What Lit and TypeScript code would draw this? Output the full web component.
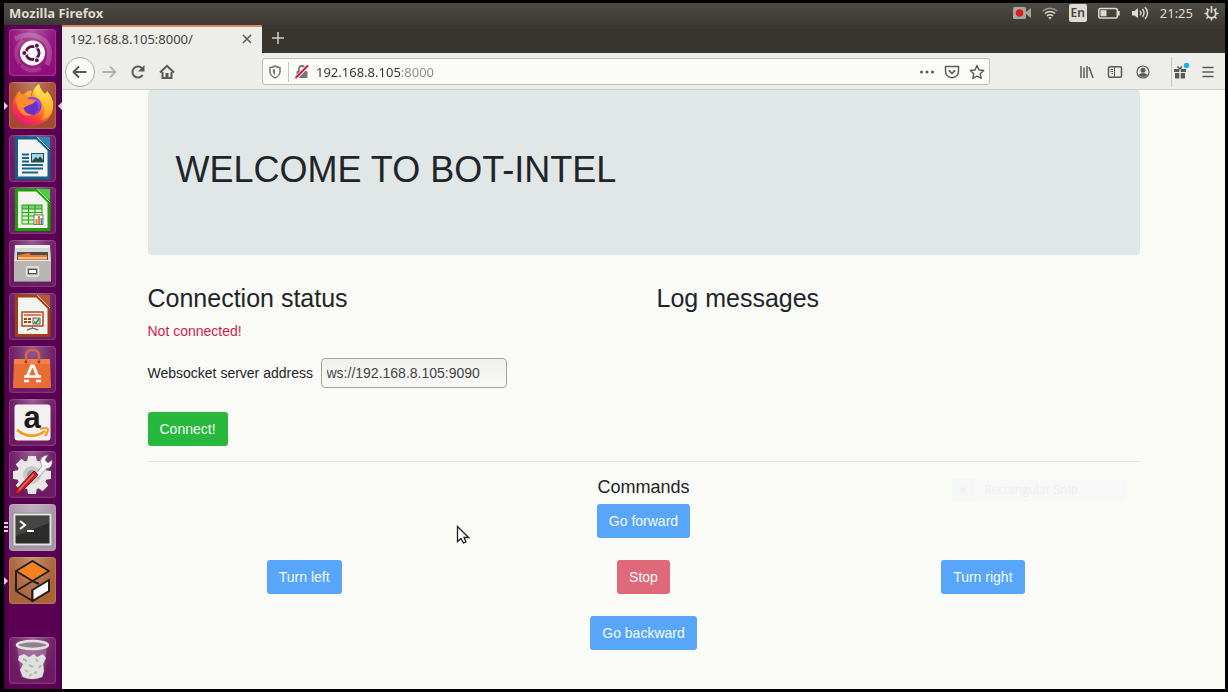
import { LitElement, html, css, svg } from "lit";
import { customElement, property, state } from "lit/decorators.js";

const launcherArt: Record<string, unknown> = {
  dash: svg`
    <path d="M6 10Q22 1 36 12Q44 22 38 36" fill="none" stroke="#fff" stroke-opacity=".2" stroke-width="5"/>
    <path d="M11 35Q2 22 14 11M32 39Q21 45 12 36" fill="none" stroke="#fff" stroke-opacity=".14" stroke-width="4"/>
    <circle cx="23.500" cy="24" r="12.500" fill="#fff"/>
    <circle cx="23.500" cy="24" r="6.500" fill="none" stroke="#5b1550" stroke-width="3"/>
    <path d="M23.500 24L13 24M23.500 24L28.500 14.500M23.500 24L28.500 33.500" stroke="#fff" stroke-width="1.400"/>
    <circle cx="23.500" cy="24" r="5" fill="#fff"/>
    <g fill="#5b1550" stroke="#fff"><circle cx="15.300" cy="24" r="2.500"/><circle cx="27.800" cy="16.700" r="2.500"/><circle cx="27.800" cy="31.300" r="2.500"/></g>`,
  firefox: svg`
    <defs>
      <linearGradient id="ff" x1=".8" y1=".1" x2=".25" y2=".95"><stop offset="0" stop-color="#fff04e"/><stop offset=".4" stop-color="#ff9a20"/><stop offset=".75" stop-color="#fb3b3e"/><stop offset="1" stop-color="#e8197a"/></linearGradient>
      <linearGradient id="fy" x1="0" y1="0" x2="0" y2="1"><stop offset="0" stop-color="#fff253"/><stop offset="1" stop-color="#ff9820"/></linearGradient>
    </defs>
    <path d="M8 12Q9 10 11 9Q11 13 15 12Q19 8 23 9Q21 13 23 15Q23 6 30 2Q31 8 36 12Q38 11 38 9Q45 17 44 26Q42 41 25 43Q8 44 3.500 29Q2 20 8 12Z" fill="url(#ff)"/>
    <path d="M30 2Q31 8 36 12Q38 11 38 9Q45 17 44 25Q41 36 33 38Q38 28 33 19Q26 14 26 11Q26 5 30 2Z" fill="url(#fy)"/>
    <circle cx="23.500" cy="24" r="9" fill="#6b30c8"/>
    <path d="M16 18Q25 10 32 21Q31 31 25 33Q33 25 26 19Z" fill="#9047ef"/>
    <path d="M8 14Q13 12 15 14L19 17L27 18Q25 22 20 23Q16 25 14 26Q16 32 24 33Q14 36 10 28Q6 21 8 14Z" fill="#ff8b2b"/>`,
  writer: svg`
    <path d="M7.500 3H28L40 15V43H7.500Z" fill="#f4f4f0" stroke="#11618a" stroke-width="3"/>
    <path d="M28 2H41V14Z" fill="#2f87ad"/><path d="M28 2L41 15" stroke="#bde1ef" stroke-width="1"/>
    <path d="M13 19.500H20M13 23H20M13 26.500H20M13 30H34M13 33.500H34M13 37.500H29" stroke="#16658c" stroke-width="1.800"/>
    <rect x="22.500" y="18.500" width="12" height="8.500" fill="#9ed8ee" stroke="#16506e"/>
    <path d="M23 26L27 22L29 24L31 21L34 25V27H23Z" fill="#2b4d45"/><circle cx="31" cy="21" r="1" fill="#f7c341"/>`,
  calc: svg`
    <path d="M7.500 3H28L40 15V42.500H7.500Z" fill="#f4f4f0" stroke="#18a303" stroke-width="3"/>
    <path d="M28 2H41V14Z" fill="#48cf3d"/><path d="M28 2L41 15" stroke="#d2f5cc"/>
    <rect x="13" y="18" width="20" height="19" fill="#d2f2ca" stroke="#28a31c"/>
    <path d="M13 22H33M13 25.500H33M13 29H33M13 33H33M19.500 18V37M26 18V37" stroke="#28a31c"/><path d="M13 18H33V22H13Z" fill="#28a31c" fill-opacity=".5"/>
    <rect x="25" y="28" width="9" height="9.500" fill="#fff" stroke="#777"/>
    <path d="M27.500 37V32M30 37V29" stroke="#de8228" stroke-width="2"/><path d="M32.500 37V31" stroke="#4587ca" stroke-width="2"/>`,
  files: svg`
    <path d="M6 5H41L42 21H5Z" fill="#d9d8d4"/><path d="M6 5H41V8H6Z" fill="#f2f1ed"/>
    <path d="M8 12H39V21H8Z" fill="#504c49"/><path d="M9 15L20 13L22 15H38V21H9Z" fill="#e47b37"/><path d="M9 18H38" stroke="#f8d3a4" stroke-width="1.500"/>
    <rect x="5" y="20" width="37" height="22" rx="1" fill="#b9b7b3"/><path d="M5.500 20.500H41.500" stroke="#ebeae6"/><path d="M5 41.500H42" stroke="#83807d"/>
    <rect x="17.500" y="27" width="12" height="9" rx="1.500" fill="#aaa8a4" stroke="#ecebe8" stroke-width="1.300"/><rect x="19.500" y="29.500" width="8" height="4" fill="#fff" stroke="#55514e"/>`,
  impress: svg`
    <path d="M7.500 3H28L40 15V42.500H7.500Z" fill="#f4f4f0" stroke="#a33e12" stroke-width="3"/>
    <path d="M28 2H41V14Z" fill="#b45a31"/><path d="M28 2L41 15" stroke="#efcfbe"/>
    <rect x="13" y="19" width="21" height="14" fill="#fff3ed" stroke="#ad4720" stroke-width="1.500"/>
    <path d="M15 22H32" stroke="#d95127" stroke-width="1.500"/><path d="M15 26H22M15 29H22" stroke="#a33e12" stroke-width="2" stroke-dasharray="3 1"/>
    <rect x="24" y="25" width="7" height="6" fill="#ddd" stroke="#666"/><path d="M25 29L27 30L30 26" fill="none" stroke="#1a9a2c" stroke-width="1.500"/>
    <path d="M23.500 33V36M18 37L23.500 35L29 37" fill="none" stroke="#777" stroke-width="1.500"/>`,
  software: svg`
    <path d="M5 13H41L42 42H4Z" fill="#e96d35"/><path d="M5 13H41V18H5Z" fill="#f18247"/>
    <path d="M17 16V10Q17 4 23.500 4Q30 4 30 10V16" fill="none" stroke="#d36748" stroke-width="2.500"/>
    <circle cx="17" cy="16" r="1.300" fill="#8d3418"/><circle cx="30" cy="16" r="1.300" fill="#8d3418"/>
    <path d="M18 31L22.500 20H24.500L29 31" fill="none" stroke="#fff" stroke-width="3"/><path d="M15 30.500H32" stroke="#fff" stroke-width="2.500"/><path d="M15 35H20M27 35H32" stroke="#fff" stroke-width="2.500"/>`,
  amazon: svg`
    <rect x="5.500" y="5.500" width="36" height="36" rx="3" fill="#f4f2f0"/>
    <text x="23" y="29" text-anchor="middle" font-family="Liberation Sans, sans-serif" font-weight="700" font-size="31" fill="#191919">a</text>
    <path d="M8 31Q22 42 36 32" fill="none" stroke="#f59a16" stroke-width="2.500"/><path d="M31 30Q38 28 39 30Q39 34 36 37" fill="none" stroke="#f59a16" stroke-width="2"/>`,
  settings: svg`
    <g transform="translate(23 24)" fill="#e9e8e6"><circle r="15"/>
      ${[0, 45, 90, 135, 180, 225, 270, 315].map((a) => svg`<path transform="rotate(${a})" d="M-4-19H4L5-12H-5Z"/>`)}
      <circle r="9" fill="#cac8c7"/><circle r="5" fill="#a09b9c"/></g>
    <path d="M26 24L33 15Q29 8 35 5L39 4L36 9L39 12L43 9Q44 17 37 18L29 27Z" fill="#f7f7f7" stroke="#8a8a8a" stroke-width=".8"/>
    <path d="M7 39L25 20L29 24L11 42Q8 44 6 42Q5 41 7 39Z" fill="#c91e29" stroke="#7e0b19"/><path d="M10 39L25 23" stroke="#ef6e6c" stroke-width="1.200"/>`,
  terminal: svg`
    <rect x="4" y="9" width="39" height="33" rx="1" fill="#e4e4e1" stroke="#928c91"/><rect x="6.500" y="11.500" width="34" height="28" fill="#2c2d2b"/>
    <path d="M7 12H40V19L7 32Z" fill="#fff" fill-opacity=".12"/><path d="M11 17L16 21L11 25" fill="none" stroke="#fff" stroke-width="2"/><path d="M18 27H25" stroke="#fff" stroke-width="1.800"/>`,
  gazebo: svg`
    <path d="M23.500 4L40 14L23.500 24L7 14Z" fill="#f58220"/>
    <path d="M23.500 4L40 14L23.500 24L7 14ZM7 14V34L23.500 44V33M7 34L23.500 24L30 27M23.500 44L40 34V23" fill="none" stroke="#21201f" stroke-width="2" stroke-linejoin="round"/>
    <path d="M23.500 33L40 23V34L23.500 44Z" fill="#fff" stroke="#21201f" stroke-width="2"/>`,
  trash: svg`
    <path d="M8 9L12 40Q23.500 45 34 40L38 9Z" fill="#fff" fill-opacity=".22"/>
    <path d="M10 19L15 17L20 20L25 17L28 20L34 17L37 21L34 27L35 34L33 40Q23 44 14 40L11 33L14 27L9 23Z" fill="#dfe1de"/>
    <path d="M14 22L18 24M20 28L24 30M27 22L29 25M32 28L30 31M16 33L19 35M25 36L28 35M20 39L23 37" fill="none" stroke="#b3b6b1" stroke-width="2"/>
    <ellipse cx="23.500" cy="8" rx="15.500" ry="4" fill="#95808f" stroke="#e2e2e0" stroke-width="2.500"/>`,
};

const glyphs: Record<string, unknown> = {
  back: svg`<path d="M14.500 8H2M7 2.500L1.500 8L7 13.500" fill="none" stroke="currentColor" stroke-width="2"/>`,
  forward: svg`<path d="M1.500 8H14M9 2.500L14.500 8L9 13.500" fill="none" stroke="currentColor" stroke-width="1.800"/>`,
  reload: svg`<path d="M12.600 11A5.500 5.500 0 1 1 12 4.300" fill="none" stroke="currentColor" stroke-width="2"/><path d="M14.500 1V7.500H8Z" fill="currentColor"/>`,
  home: svg`<path d="M1 8.500L8 1.800L15 8.500" fill="none" stroke="currentColor" stroke-width="2"/><path d="M3.500 8V14H12.500V8" fill="none" stroke="currentColor" stroke-width="2"/><path d="M6.500 9H9.500V14H6.500Z" fill="currentColor"/>`,
  close: svg`<path d="M4 4L12 12M12 4L4 12" stroke="currentColor" stroke-width="1.500"/>`,
  plus: svg`<path d="M8 2V14M2 8H14" stroke="currentColor" stroke-width="1.500"/>`,
  shield: svg`<path d="M8 2Q10.500 3.500 13 3.500V8Q12.500 12 8 14Q3.500 12 3 8V3.500Q5.500 3.500 8 2Z" fill="none" stroke="currentColor" stroke-width="1.500"/><path d="M8 5V11Q6 10 5.800 8V5.500Z" fill="currentColor"/>`,
  lock: svg`<rect x="2.500" y="7" width="11" height="7" rx="1" fill="#777"/><path d="M5 7V5Q5 2 8 2Q11 2 11 5V7" fill="none" stroke="#777" stroke-width="1.800"/><path d="M1.500 14.500L14 1.500" stroke="#fbfbf8" stroke-width="3.500"/><path d="M1.500 14L14 1.500" stroke="#d70a45" stroke-width="1.800"/>`,
  dots: svg`<g fill="currentColor"><circle cx="2.500" cy="8" r="1.500"/><circle cx="8" cy="8" r="1.500"/><circle cx="13.500" cy="8" r="1.500"/></g>`,
  pocket: svg`<path d="M1.500 2.500H14.500V7Q14 13.500 8 13.700Q2 13.500 1.500 7Z" fill="none" stroke="currentColor" stroke-width="1.500" stroke-linejoin="round"/><path d="M4.800 6.300L8 9.300L11.200 6.300" fill="none" stroke="currentColor" stroke-width="1.700"/>`,
  star: svg`<path d="M8 1.500L10 6L14.700 6.500L11.200 9.700L12.200 14.400L8 12L3.800 14.400L4.800 9.700L1.300 6.500L6 6Z" fill="none" stroke="currentColor" stroke-width="1.400" stroke-linejoin="round"/>`,
  library: svg`<path d="M2 2V14M5 3.500V14M8 2V14M10 3L14 14" stroke="currentColor" stroke-width="1.500"/>`,
  sidebar: svg`<rect x="1.500" y="2.800" width="13" height="10.500" rx="1.500" fill="none" stroke="currentColor" stroke-width="1.500"/><path d="M7.500 3V13M3.500 5.500H6M3.500 7.500H6M4.500 9.500H6" stroke="currentColor"/>`,
  account: svg`<circle cx="8" cy="8" r="6" fill="none" stroke="currentColor" stroke-width="1.200"/><circle cx="8" cy="6.200" r="2.500" fill="currentColor"/><path d="M3.500 11Q5 9 8 9Q11 9 12.500 11Q11 13 8 13Q5 13 3.500 11Z" fill="currentColor"/>`,
  gift: svg`<path d="M2 5H7.300V8H2ZM8.700 5H14V8H8.700ZM3 9H7.300V14.500H3ZM8.700 9H13V14.500H8.700Z" fill="currentColor"/><path d="M8 5L5.500 2.500M8 5L10 2.500" stroke="currentColor" stroke-width="1.500"/><circle cx="14.500" cy="1.500" r="2.700" fill="#12b6ef"/>`,
  menu: svg`<path d="M2.500 3.500H13.500M2.500 8H13.500M2.500 12.500H13.500" stroke="currentColor" stroke-width="1.600"/>`,
  record: svg`<rect x="0" y="2" width="13" height="12" rx="1.500" fill="#a8a5a1"/><path d="M13 7L18 3V13L13 9Z" fill="#a8a5a1"/><circle cx="6.500" cy="8" r="3.800" fill="#dc1d20"/>`,
  wifi: svg`<g fill="none" stroke="currentColor" stroke-width="1.400"><path d="M.7 6Q8 .5 15.300 6" opacity=".55"/><path d="M2.800 8.500Q8 4.500 13.200 8.500M4.800 11Q8 8.500 11.200 11"/></g><path d="M6.300 12.500Q8 11.300 9.700 12.500L8 14.500Z" fill="currentColor"/>`,
  battery: svg`<rect x=".8" y="3.500" width="18.500" height="9.500" rx="1.500" fill="none" stroke="currentColor" stroke-width="1.500"/><rect x="2.500" y="5.200" width="6" height="6" fill="currentColor"/><path d="M20.800 6V10.500" stroke="currentColor" stroke-width="1.800"/>`,
  sound: svg`<path d="M1 6H3.500L7 3V13L3.500 10.500H1Z" fill="currentColor"/><path d="M9 6Q11 8 9 10.300M11.500 4Q14.500 8 11.500 12M14 2Q19 8 14 14" fill="none" stroke="currentColor" stroke-width="1.400"/>`,
  power: svg`<circle cx="7.500" cy="8.500" r="4.300" fill="none" stroke="currentColor" stroke-width="1.800"/><path d="M7.500 2V8" stroke="#49473f" stroke-width="4"/><path d="M7.500 1V8M.5 8.500H3M12 8.500H14.500M2.500 3.500L4.300 5.300M12.500 3.500L10.700 5.300M2.500 13.500L4.300 11.700M12.500 13.500L10.700 11.700M7.500 13V15.500" stroke="currentColor" stroke-width="1.600"/>`,
};

const glyph = (name: string, width = 16) =>
  html`<svg width=${width} height="16" viewBox="0 0 ${width} 16" aria-hidden="true">${glyphs[name]}</svg>`;

@customElement("system-panel")
class SystemPanel extends LitElement {
  static styles = css`
    :host { display: flex; align-items: center; justify-content: space-between; box-sizing: border-box; height: 22px; padding: 0 6px 2px 5px;
      background: linear-gradient(#4d4a42, #3c3a34); color: #dfdbd2; font: 12px/20px "Noto Sans", sans-serif; }
    svg { display: block; }
    .title { font-weight: 700; font-size: 13px; }
    .tray { display: flex; align-items: center; gap: 11px; }
    .lang { background: #dfdbd2; color: #45423b; border-radius: 2px; width: 18px; line-height: 18px; text-align: center; font-weight: 600; }
    time { font-size: 13px; }
  `;
  render() {
    return html`
      <span class="title">Mozilla Firefox</span>
      <div class="tray">
        ${glyph("record", 18)}${glyph("wifi")}<span class="lang">En</span>${glyph("battery", 22)}${glyph("sound", 18)}
        <time>21:25</time>${glyph("power", 15)}
      </div>`;
  }
}

interface LauncherItem { icon: string; label: string; tile: string; mark?: string; }

@customElement("app-launcher")
class AppLauncher extends LitElement {
  static styles = css`
    :host { display: flex; flex-direction: column; gap: 33px; width: 58px; padding: 4px 0 5px; box-sizing: border-box;
      background: linear-gradient(90deg, #4c0046, #5c0053 8px, #5c0053 52px, #4c0046); }
    .apps { flex: 1; display: flex; flex-direction: column; justify-content: space-between; }
    .slot { position: relative; display: flex; justify-content: center; padding-right: 1px; }
    .tile { display: block; width: 47px; height: 47px; padding: 0; border: 0; border-radius: 4px; overflow: hidden;
      box-shadow: inset 0 0 2px rgba(255, 255, 255, 0.5);
      background: radial-gradient(ellipse at 50% 0, rgba(255, 255, 255, 0.3), rgba(255, 255, 255, 0.02) 70%); }
    .plum { background-color: #8f0a78; }
    .rust { background-color: #a2462b; }
    .dark { background-color: #6a1560; }
    .grey { background-color: #a692a8; }
    .copper { background-color: #a95f32; }
    .running::before, .focused::after { content: ""; position: absolute; top: 20px; border: 4px solid transparent; }
    .running::before { left: 0; border-left-color: #ddd3dc; border-right-width: 0; }
    .focused::after { right: 0; border-right-color: #ddd3dc; border-left-width: 0; }
    .several::before { content: ""; position: absolute; left: 0; top: 18px; width: 4px; height: 10px;
      background: repeating-linear-gradient(#ddd3dc 0 2px, transparent 2px 4px); }
    svg { display: block; }
  `;
  @property({ attribute: false }) items: LauncherItem[] = [
    { icon: "dash", label: "Search your computer", tile: "plum" },
    { icon: "firefox", label: "Firefox", tile: "rust", mark: "running focused" },
    { icon: "writer", label: "LibreOffice Writer", tile: "dark" },
    { icon: "calc", label: "LibreOffice Calc", tile: "dark" },
    { icon: "files", label: "Files", tile: "dark" },
    { icon: "impress", label: "LibreOffice Impress", tile: "dark" },
    { icon: "software", label: "Ubuntu Software", tile: "dark" },
    { icon: "amazon", label: "Amazon", tile: "dark" },
    { icon: "settings", label: "System Settings", tile: "dark" },
    { icon: "terminal", label: "Terminal", tile: "grey", mark: "several" },
    { icon: "gazebo", label: "Gazebo", tile: "copper", mark: "running" },
  ];
  private slotFor(item: LauncherItem) {
    return html`<div class="slot ${item.mark ?? ""}">
      <button class="tile ${item.tile}" aria-label=${item.label}>
        <svg width="47" height="47" viewBox="0 0 47 47" aria-hidden="true">${launcherArt[item.icon]}</svg>
      </button>
    </div>`;
  }
  render() {
    return html`<div class="apps">${this.items.map((i) => this.slotFor(i))}</div>
      ${this.slotFor({ icon: "trash", label: "Trash", tile: "dark" })}`;
  }
}

@customElement("browser-chrome")
class BrowserChrome extends LitElement {
  static styles = css`
    :host { display: block; font: 13px/20px "Noto Sans", sans-serif; color: #44443f; }
    svg { display: block; }
    button { display: flex; align-items: center; justify-content: center; border: 0; padding: 0; background: none; color: #5a5a55; }
    .tabs { display: flex; height: 28px; background: #37352e; }
    .tab { display: flex; align-items: center; justify-content: space-between; box-sizing: border-box; width: 200px;
      padding: 0 7px 2px 8px; background: #edeee9; border-top: 2px solid #e08563; }
    .new { width: 31px; padding-bottom: 2px; color: #d0cec7; }
    .bar { display: flex; align-items: center; box-sizing: border-box; height: 37px; padding-top: 1px; background: #edeee9; border-bottom: 1px solid #cbccc5; }
    .nav { display: flex; align-items: center; gap: 13px; width: 197px; padding-left: 3px; }
    .nav .back { box-sizing: border-box; width: 30px; height: 30px; border: 1px solid #a9aaa4; border-radius: 50%; background: #fafaf7; margin-right: -7px; }
    .nav .off { color: #b3b3ae; }
    .address { flex: 1; min-width: 0; display: flex; align-items: center; box-sizing: border-box; height: 27px; padding: 0 4px;
      border: 1px solid #bfc0b9; border-radius: 3px; background: #fbfbf8; color: #6a6a65; }
    .shield { color: #777; }
    .rule { width: 1px; height: 20px; margin: 0 5px; background: #c8c8c2; }
    .url { flex: 1; min-width: 0; border: 0; outline: 0; padding: 0; margin-left: 6px; font: inherit; color: transparent; caret-color: #333;
      background: linear-gradient(90deg, #33332f 84px, #8c8c87 84px); -webkit-background-clip: text; background-clip: text; }
    .inside { display: flex; gap: 9px; }
    .tools { display: flex; align-items: center; justify-content: flex-end; gap: 12px; width: 226px; padding-right: 9px; }
    .tools .rule { height: 30px; margin: 0 -12px 0 8px; }
    .tools svg, .inside svg { overflow: visible; }
  `;
  @state() private url = "192.168.8.105:8000";
  private tool = (name: string, label: string, cls = "") =>
    html`<button class=${cls} aria-label=${label}>${glyph(name)}</button>`;
  render() {
    return html`
      <div class="tabs">
        <div class="tab"><span>${this.url}/</span>${this.tool("close", "Close tab")}</div>
        ${this.tool("plus", "Open a new tab", "new")}
      </div>
      <div class="bar">
        <div class="nav">
          ${this.tool("back", "Back", "back")}${this.tool("forward", "Forward", "off")}
          ${this.tool("reload", "Reload")}${this.tool("home", "Home")}
        </div>
        <div class="address">
          ${this.tool("shield", "Tracking protection", "shield")}<span class="rule"></span>${this.tool("lock", "Connection is not secure")}
          <input class="url" type="text" aria-label="Address" .value=${this.url} />
          <div class="inside">${this.tool("dots", "Page actions")}${this.tool("pocket", "Save to Pocket")}${this.tool("star", "Bookmark this page")}</div>
        </div>
        <div class="tools">
          ${this.tool("library", "Library")}${this.tool("sidebar", "Sidebars")}${this.tool("account", "Account")}
          <span class="rule"></span>
          ${this.tool("gift", "What's new")}${this.tool("menu", "Menu")}
        </div>
      </div>`;
  }
}

@customElement("bot-page")
class BotPage extends LitElement {
  static styles = css`
    :host { display: block; background: #fafaf7; color: #212529; font: 14px/22px "Liberation Sans", Arial, sans-serif; }
    .container { max-width: 992px; margin: 0 auto; padding-bottom: 24px; }
    h1, h3, h5, p { margin: 0; font-weight: 400; }
    .jumbotron { padding: 58px 28px 63px; margin-bottom: 27px; border-radius: 4px; background: #e1e7e7; }
    h1 { font-size: 36px; line-height: 44px; }
    h3 { font-size: 25px; line-height: 32px; margin-bottom: 6px; }
    h5 { font-size: 18px; line-height: 22px; margin-bottom: 6px; text-align: center; }
    .halves { display: grid; grid-template-columns: 1fr 1fr; gap: 26px; }
    .status { color: #cb1f4a; margin-bottom: 16px; }
    .field { display: flex; align-items: center; gap: 5px; margin-bottom: 24px; }
    .field label { min-width: 168px; }
    .field input { box-sizing: border-box; width: 186px; height: 30px; padding: 0 5px; border: 1px solid #a3a39f; border-radius: 4px;
      background: linear-gradient(#f0f0ed, #f8f9f6); font: inherit; color: #444; }
    .btn { height: 34px; padding: 0 12px; border: 0; border-radius: 3px; font: inherit; color: #f5fafa; background: #57a6fa; }
    .success { background: #28b83d; }
    .danger { background: #df687b; }
    hr { height: 1px; margin: 15px 0 14px; border: 0; background: #e4e4e1; }
    .pad { display: grid; grid-template-columns: repeat(3, 1fr); gap: 22px 26px; justify-items: center; }
    .mid { grid-column: 2; }
    .left { grid-column: 1; }
  `;
  @state() private address = "ws://192.168.8.105:9090";
  render() {
    return html`<main class="container">
      <header class="jumbotron"><h1>WELCOME TO BOT-INTEL</h1></header>
      <div class="halves">
        <section>
          <h3>Connection status</h3>
          <p class="status">Not connected!</p>
          <div class="field">
            <label for="server">Websocket server address</label>
            <input id="server" type="text" .value=${this.address} />
          </div>
          <button class="btn success">Connect!</button>
        </section>
        <section><h3>Log messages</h3></section>
      </div>
      <hr />
      <h5>Commands</h5>
      <div class="pad">
        <button class="btn mid" disabled>Go forward</button>
        <button class="btn left" disabled>Turn left</button>
        <button class="btn danger" disabled>Stop</button>
        <button class="btn" disabled>Turn right</button>
        <button class="btn mid" disabled>Go backward</button>
      </div>
    </main>`;
  }
}

@customElement("app-root")
class AppRoot extends LitElement {
  static styles = css`
    :host { position: relative; display: flex; flex-direction: column; box-sizing: border-box; min-height: 100vh;
      border: 3px solid #000; border-left-width: 4px; background: #fafaf7; }
    .desktop { flex: 1; display: flex; }
    .window { flex: 1; min-width: 0; display: flex; flex-direction: column; }
    .page { flex: 1; }
    .snip { position: absolute; right: 100px; top: 476px; display: flex; width: 173px; height: 22px; background: #f7f8f7;
      color: #f1efec; font: 12px/22px "Open Sans", sans-serif; }
    .snip-mark { display: grid; place-items: center; width: 22px; margin-right: 10px; background: #f4f7f6; }
    .snip-mark::before { content: ""; width: 6px; height: 6px; border-radius: 50%; background: #f4f0ec; }
    .pointer { position: absolute; left: 452px; top: 522px; }
  `;
  render() {
    return html`
      <system-panel></system-panel>
      <div class="desktop">
        <app-launcher></app-launcher>
        <div class="window">
          <browser-chrome></browser-chrome>
          <bot-page class="page"></bot-page>
        </div>
      </div>
      <div class="snip"><span class="snip-mark"></span>Rectangular Snip</div>
      <svg class="pointer" width="14" height="20" viewBox="0 0 14 20" aria-hidden="true">
        <path d="M1.500 1.500V16.500L5 13.500L7.500 18L10 17L8 12.500H12.500Z" fill="#fff" stroke="#1c1c1c" stroke-width="1.300" />
      </svg>`;
  }
}
